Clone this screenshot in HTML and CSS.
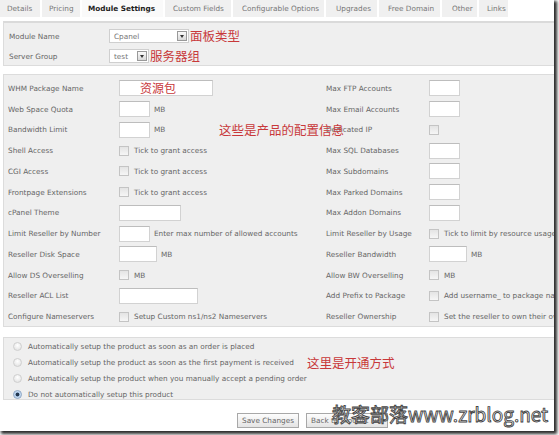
FILE: index.html
```html
<!DOCTYPE html>
<html>
<head>
<meta charset="utf-8">
<link rel="stylesheet" href="styles.css">
</head>
<body>
<div class="frame">
  <div class="page">
    <ul class="tabs">
      <li class="tab t1">Details</li>
      <li class="tab t2">Pricing</li>
      <li class="tab t3 active">Module Settings</li>
      <li class="tab t4">Custom Fields</li>
      <li class="tab t5">Configurable Options</li>
      <li class="tab t6">Upgrades</li>
      <li class="tab t7">Free Domain</li>
      <li class="tab t8">Other</li>
      <li class="tab t9">Links</li>
    </ul>

    <div class="box box-module">
      <div class="mrow">
        <span class="lbl">Module Name</span>
        <span class="select w80"><span class="sel-text">Cpanel</span><span class="sel-btn"></span></span>
        <span class="note">面板类型</span>
      </div>
      <div class="mrow">
        <span class="lbl">Server Group</span>
        <span class="select w40"><span class="sel-text">test</span><span class="sel-btn"></span></span>
        <span class="note">服务器组</span>
      </div>
    </div>

    <div class="box box-config">
      <div class="grid">
        <span class="lbl">WHM Package Name</span>
        <span class="fld"><span class="inp w94"><span class="note in-note">资源包</span></span></span>
        <span class="lbl">Max FTP Accounts</span>
        <span class="fld"><span class="inp w31"></span></span>

        <span class="lbl">Web Space Quota</span>
        <span class="fld"><span class="inp w31"></span><span class="unit">MB</span></span>
        <span class="lbl">Max Email Accounts</span>
        <span class="fld"><span class="inp w31"></span></span>

        <span class="lbl">Bandwidth Limit</span>
        <span class="fld"><span class="inp w31"></span><span class="unit">MB</span></span>
        <span class="lbl">Dedicated IP</span>
        <span class="fld"><span class="chk"></span></span>

        <span class="lbl">Shell Access</span>
        <span class="fld"><span class="chk"></span><span class="ctext">Tick to grant access</span></span>
        <span class="lbl">Max SQL Databases</span>
        <span class="fld"><span class="inp w31"></span></span>

        <span class="lbl">CGI Access</span>
        <span class="fld"><span class="chk"></span><span class="ctext">Tick to grant access</span></span>
        <span class="lbl">Max Subdomains</span>
        <span class="fld"><span class="inp w31"></span></span>

        <span class="lbl">Frontpage Extensions</span>
        <span class="fld"><span class="chk"></span><span class="ctext">Tick to grant access</span></span>
        <span class="lbl">Max Parked Domains</span>
        <span class="fld"><span class="inp w31"></span></span>

        <span class="lbl">cPanel Theme</span>
        <span class="fld"><span class="inp w62"></span></span>
        <span class="lbl">Max Addon Domains</span>
        <span class="fld"><span class="inp w31"></span></span>

        <span class="lbl">Limit Reseller by Number</span>
        <span class="fld"><span class="inp w31"></span><span class="unit">Enter max number of allowed accounts</span></span>
        <span class="lbl">Limit Reseller by Usage</span>
        <span class="fld"><span class="chk"></span><span class="ctext">Tick to limit by resource usage</span></span>

        <span class="lbl">Reseller Disk Space</span>
        <span class="fld"><span class="inp w37"></span><span class="unit">MB</span></span>
        <span class="lbl">Reseller Bandwidth</span>
        <span class="fld"><span class="inp w37"></span><span class="unit">MB</span></span>

        <span class="lbl">Allow DS Overselling</span>
        <span class="fld"><span class="chk"></span><span class="ctext">MB</span></span>
        <span class="lbl">Allow BW Overselling</span>
        <span class="fld"><span class="chk"></span><span class="ctext">MB</span></span>

        <span class="lbl">Reseller ACL List</span>
        <span class="fld"><span class="inp w79"></span></span>
        <span class="lbl">Add Prefix to Package</span>
        <span class="fld"><span class="chk"></span><span class="ctext">Add username_ to package name</span></span>

        <span class="lbl">Configure Nameservers</span>
        <span class="fld"><span class="chk"></span><span class="ctext">Setup Custom ns1/ns2 Nameservers</span></span>
        <span class="lbl">Reseller Ownership</span>
        <span class="fld"><span class="chk"></span><span class="ctext">Set the reseller to own their own account</span></span>
      </div>
      <span class="note big-note">这些是产品的配置信息</span>
    </div>

    <div class="box box-setup">
      <div class="rrow"><span class="radio"></span><span>Automatically setup the product as soon as an order is placed</span></div>
      <div class="rrow"><span class="radio"></span><span>Automatically setup the product as soon as the first payment is received</span></div>
      <div class="rrow"><span class="radio"></span><span>Automatically setup the product when you manually accept a pending order</span></div>
      <div class="rrow"><span class="radio on"></span><span>Do not automatically setup this product</span></div>
      <span class="note setup-note">这里是开通方式</span>
    </div>

    <div class="buttons">
      <span class="btn">Save Changes</span>
      <span class="btn">Back to Product List</span>
    </div>
    <div class="watermark">教客部落www.zrblog.net</div>
  </div>
</div>
</body>
</html>
```

FILE: styles.css
```css
* { box-sizing: border-box; }
html, body { margin: 0; padding: 0; background: #ffffff; }
body { width: 559px; height: 435px; overflow: hidden; }

.frame {
  width: 554px;
  height: 431px;
  overflow: hidden;
  background: #ffffff;
  box-shadow: 2px 2px 3px 1px #2a2a2a;
  position: relative;
}

.page {
  width: 600px;
  font-family: "DejaVu Sans", sans-serif;
  font-size: 7.3px;
  color: #666666;
  position: relative;
  height: 431px;
}

.tabs {
  list-style: none;
  margin: 0;
  padding: 0;
  display: flex;
  height: 17px;
  width: 508px;
}
.tab {
  flex: none;
  background: #f0f0f0;
  height: 17px;
  line-height: 17px;
  margin-right: 2px;
  color: #777;
  padding: 0 0 0 7px;
  white-space: nowrap;
  overflow: hidden;
}
.tab.active { background: #fafafa; color: #222; font-weight: bold; }
.t1 { width: 40px; }
.t2 { width: 38px; }
.t3 { width: 81px; padding-left: 6px; }
.t4 { width: 66px; padding-left: 8px; }
.t5 { width: 91px; padding-left: 9px; }
.t6 { width: 51px; padding-left: 10px; }
.t7 { width: 61px; padding-left: 9px; }
.t8 { width: 35px; padding-left: 10px; }
.t9 { flex: 1; margin-right: 0; padding-left: 8px; }

.box {
  background: #efefef;
  border: 1px solid #dcdcdc;
  margin-left: 3px;
  position: relative;
}

.box-module {
  margin-top: 4px;
  height: 45px;
  padding: 3px 0 0 5px;
  border-top: 2px solid #dadada;
}
.mrow {
  height: 20px;
  display: flex;
  align-items: center;
}
.mrow .lbl { width: 100px; }

.select {
  display: inline-flex;
  align-items: center;
  height: 14px;
  background: #ffffff;
  border: 1px solid #cfcfcf;
  position: relative;
}
.w80 { width: 80px; }
.w40 { width: 40px; }
.sel-text { flex: 1; padding-left: 4px; color: #777; }
.sel-btn {
  width: 10px;
  height: 10px;
  margin-right: 1px;
  border: 1px solid #999;
  background: linear-gradient(#fafafa, #d8d8d8);
  position: relative;
}
.sel-btn::after {
  content: "";
  position: absolute;
  left: 2px;
  top: 3px;
  border-left: 2px solid transparent;
  border-right: 2px solid transparent;
  border-top: 3px solid #333;
}

.note {
  font-family: "Noto Sans CJK SC", sans-serif;
  color: #c8383a;
  font-size: 12.5px;
  line-height: 1;
  margin-left: 1px;
}

.box-config {
  margin-top: 8px;
  padding: 3px 0 2px 4px;
  height: 253px;
}
.grid {
  display: grid;
  grid-template-columns: 111px 207px 103px 1fr;
  grid-auto-rows: 20.75px;
  align-items: center;
}
.fld { display: flex; align-items: center; white-space: nowrap; }
.lbl { white-space: nowrap; }
.inp {
  display: inline-block;
  height: 16px;
  background: #ffffff;
  border: 1px solid #d2d2d2;
  border-top-color: #bdbdbd;
  position: relative;
}
.w31 { width: 31px; }
.w37 { width: 38px; }
.w62 { width: 62px; }
.w79 { width: 79px; }
.w94 { width: 94px; }
.unit { margin-left: 4px; }
.in-note { position: absolute; left: 20px; top: 1px; font-size: 12px; margin: 0; }
.chk {
  width: 10px;
  height: 10px;
  border: 1px solid #c4c4c4;
  background: linear-gradient(#e4e4e4, #f6f6f6);
  display: inline-block;
  margin-right: 5px;
}
.big-note { position: absolute; left: 215px; top: 49px; margin: 0; }

.box-setup {
  margin-top: 10px;
  height: 63px;
  padding: 0 0 0 9px;
}
.rrow {
  height: 16px;
  display: flex;
  align-items: center;
}
.radio {
  width: 9px;
  height: 9px;
  border-radius: 50%;
  border: 1px solid #cfcfcf;
  background: radial-gradient(circle at 50% 35%, #ffffff, #dedede);
  margin-right: 6px;
  display: inline-block;
}
.radio.on {
  background: radial-gradient(circle, #22364f 0, #22364f 1.6px, #a9c6e6 2.2px, #e3eefa 4px);
  border-color: #88a3c4;
}
.setup-note { position: absolute; left: 303px; top: 19px; margin: 0; }

.buttons {
  display: flex;
  gap: 7px;
  padding-left: 237px;
  margin-top: 13px;
}
.btn {
  height: 15px;
  line-height: 13px;
  border: 1px solid #a8a8a8;
  background: linear-gradient(#fdfdfd, #e4e4e4);
  padding: 0 4px;
  color: #666;
  white-space: nowrap;
}

.watermark {
  position: absolute;
  left: 332px;
  top: 404px;
  font-family: "Noto Sans CJK SC", "DejaVu Sans", sans-serif;
  font-size: 19px;
  font-weight: normal;
  color: #ffffff;
  -webkit-text-stroke: 0.9px #444;
  letter-spacing: 0;
  white-space: nowrap;
  line-height: 1;
}
```
